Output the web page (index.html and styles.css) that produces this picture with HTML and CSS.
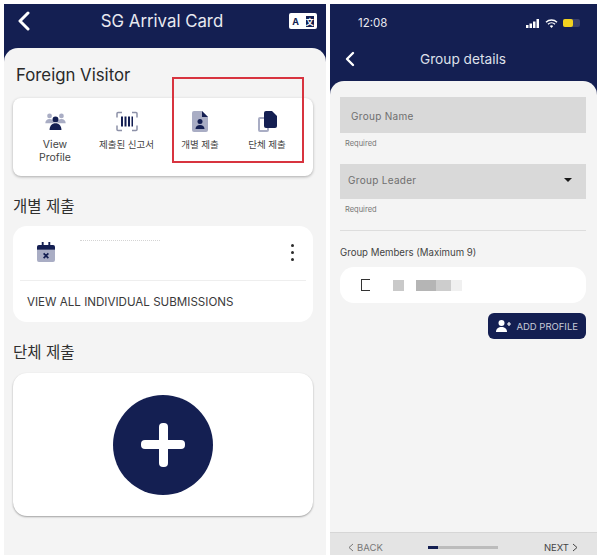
FILE: index.html
```html
<!DOCTYPE html>
<html>
  <head>
    <title>SG Arrival Card</title>
    <meta charset="UTF-8" />
    <link rel="stylesheet" href="styles.css">
  </head>
  <body>
    <div class="screens">
      <div class="phone phone-left">
        <header class="bar">
          <svg class="back" width="14" height="20" viewBox="0 0 14 20"><path d="M11 2 3 10l8 8" fill="none" stroke="#fff" stroke-width="3" stroke-linecap="round" stroke-linejoin="round"/></svg>
          <h1>SG Arrival Card</h1>
          <span class="lang"><b>A</b><i>文</i></span>
        </header>
        <main class="sheet">
          <h2 class="visitor">Foreign Visitor</h2>
          <div class="menu">
            <div class="menu-item item-a">
              <svg width="21" height="17" viewBox="0 0 24 20">
                <g fill="#a9adc4"><circle cx="5" cy="3.500" r="2.800"/><circle cx="19" cy="3.500" r="2.800"/><path d="M0 12c0-3 2-5 5-5s5 2 5 5zM14 12c0-3 2-5 5-5s5 2 5 5z"/></g>
                <g fill="#141f52"><circle cx="12" cy="7.500" r="3.500"/><path d="M5 20c0-5 3-8 7-8s7 3 7 8z"/></g>
              </svg>
              <span>View<br>Profile</span>
            </div>
            <div class="menu-item item-b">
              <svg width="22" height="20" viewBox="0 0 22 20">
                <path d="M1 6V2a1 1 0 0 1 1-1h4M16 1h4a1 1 0 0 1 1 1v4M21 14v4a1 1 0 0 1-1 1h-4M6 19H2a1 1 0 0 1-1-1v-4" fill="none" stroke="#8d91a8" stroke-width="1.500"/>
                <path d="M5 5h2v10H5zM8.500 5h2v10h-2zM12 5h2v10h-2zM15.500 5H17v10h-1.500z" fill="#141f52"/>
              </svg>
              <span class="label-ko">제출된 신고서</span>
            </div>
            <div class="menu-item item-c">
              <svg width="16" height="21" viewBox="0 0 16 21">
                <path d="M2 0h8l6 6v13a2 2 0 0 1-2 2H2a2 2 0 0 1-2-2V2a2 2 0 0 1 2-2z" fill="#a9adc4"/>
                <path d="M10 0l6 6h-6z" fill="#141f52"/>
                <circle cx="8" cy="10.500" r="2.500" fill="#141f52"/>
                <path d="M3.500 18c0-2.500 2-4 4.500-4s4.500 1.500 4.500 4z" fill="#141f52"/>
              </svg>
              <span class="label-ko">개별 제출</span>
            </div>
            <div class="menu-item item-d">
              <svg width="19" height="21" viewBox="0 0 19 21">
                <path d="M2 6h7a2 2 0 0 1 2 2v11a2 2 0 0 1-2 2H2a2 2 0 0 1-2-2V8a2 2 0 0 1 2-2z" fill="#a9adc4"/>
                <path d="M2 8h7v11H2z" fill="#fff"/>
                <path d="M8 0h6l5 5v10a2 2 0 0 1-2 2H8a2 2 0 0 1-2-2V2a2 2 0 0 1 2-2z" fill="#141f52"/>
              </svg>
              <span class="label-ko">단체 제출</span>
            </div>
          </div>

          <h2 class="section-title">개별 제출</h2>
          <div class="submissions">
            <div class="submission-row">
              <svg class="calendar" width="18" height="20" viewBox="0 0 19 21">
                <path d="M0 8h19v11a2 2 0 0 1-2 2H2a2 2 0 0 1-2-2z" fill="#a9adc4"/>
                <path d="M2 3h15a2 2 0 0 1 2 2v3H0V5a2 2 0 0 1 2-2z" fill="#141f52"/>
                <path d="M5 0h2v4H5zM12 0h2v4h-2z" fill="#141f52"/>
                <path d="m7 12 5 5M12 12l-5 5" stroke="#141f52" stroke-width="1.800"/>
              </svg>
              <span class="smudge"></span>
              <span class="dots"><i></i><i></i><i></i></span>
            </div>
            <div class="view-all">VIEW ALL INDIVIDUAL SUBMISSIONS</div>
          </div>

          <h2 class="section-title section-group">단체 제출</h2>
          <div class="group-card">
            <div class="add-circle"><span class="plus-h"></span><span class="plus-v"></span></div>
          </div>
        </main>
        <div class="highlight"></div>
      </div>

      <div class="phone phone-right">
        <header class="bar-tall">
          <div class="status">
            <span class="time">12:08</span>
            <span class="status-icons">
              <svg width="14" height="9" viewBox="0 0 14 9"><path d="M0 6h2.500v3H0zM3.500 4.500H6V9H3.500zM7 2.500h2.500V9H7zM10.500 0H13v9h-2.500z" fill="#fff"/></svg>
              <svg width="13" height="9" viewBox="0 0 13 9"><path d="M1 3.200a8 8 0 0 1 11 0M3 5.300a5 5 0 0 1 7 0" fill="none" stroke="#fff" stroke-width="1.400"/><path d="M6.500 9 4.800 7a2.500 2.500 0 0 1 3.400 0z" fill="#fff"/></svg>
              <span class="battery"><i></i></span>
            </span>
          </div>
          <div class="title-row">
            <svg width="10" height="16" viewBox="0 0 10 16"><path d="M8 2 2 8l6 6" fill="none" stroke="#fff" stroke-width="2.400" stroke-linecap="round" stroke-linejoin="round"/></svg>
            <h1>Group details</h1>
          </div>
        </header>
        <main class="form">
          <div class="field name-field">Group Name</div>
          <p class="hint">Required</p>
          <div class="field leader-field">Group Leader<span class="caret"></span></div>
          <p class="hint">Required</p>
          <hr class="rule">
          <h3>Group Members (Maximum 9)</h3>
          <div class="member">
            <span class="member-mark"></span>
            <span class="blur blur-a"></span>
            <span class="blur blur-b"></span>
            <span class="blur blur-c"></span>
            <span class="blur blur-d"></span>
          </div>
          <div class="add-row">
            <div class="add-profile">
              <svg width="15" height="12" viewBox="0 0 15 12"><circle cx="5.500" cy="3" r="3" fill="#fff"/><path d="M0 12c0-3.500 2.500-5 5.500-5s5.500 1.500 5.500 5z" fill="#fff"/><path d="M11 4h4M13 2v4" stroke="#fff" stroke-width="1.200"/></svg>
              ADD PROFILE
            </div>
          </div>
        </main>
        <footer class="steps">
          <span class="step-link">
            <svg width="6" height="9" viewBox="0 0 6 9"><path d="M5 1 1 4.500 5 8" fill="none" stroke="#777" stroke-width="1"/></svg>
            BACK
          </span>
          <span class="progress"><i></i></span>
          <span class="step-link step-next">
            NEXT
            <svg width="6" height="9" viewBox="0 0 6 9"><path d="M1 1l4 3.500L1 8" fill="none" stroke="#444" stroke-width="1"/></svg>
          </span>
        </footer>
      </div>
    </div>
  </body>
</html>
```

FILE: styles.css
```css
html,
body {
  margin: 0;
  height: 555px;
  overflow: hidden;
  background: #fff;
}

body {
  font-family: Inter, "Noto Sans CJK KR", sans-serif;
  color: #2b2b2b;
}

h1,
h2,
h3,
p {
  margin: 0;
  font-weight: 400;
}

.screens {
  display: flex;
  gap: 4px;
  padding: 4px 3px 0 4px;
  height: 551px;
}

.phone {
  position: relative;
  display: flex;
  flex-direction: column;
  background: #141f52;
  overflow: hidden;
}

.phone-left {
  width: 322px;
}

.phone-right {
  width: 267px;
}

.bar {
  display: flex;
  align-items: center;
  justify-content: space-between;
  height: 34px;
  padding: 0 9px 0 13px;
  flex: none;
}

.bar h1 {
  margin-left: 4px;
  font-size: 16.800px;
  color: #e8e9f0;
}

.lang {
  display: flex;
  align-items: center;
  justify-content: space-around;
  width: 28px;
  height: 16px;
  background: #fff;
  border-radius: 2px;
  font-size: 9px;
  color: #141f52;
}

.lang i {
  font-style: normal;
  font-family: "Noto Sans CJK SC", sans-serif;
  font-weight: 700;
  font-size: 8px;
  background: #141f52;
  color: #fff;
  line-height: 11px;
}

.sheet {
  flex: 1;
  margin-top: 10px;
  background: #f4f4f4;
  border-radius: 14px 14px 0 0;
  padding: 16px 13px 0 9px;
}

.visitor {
  font-size: 16.800px;
  line-height: 22px;
  margin-left: 3px;
  color: #2a2a2a;
}

.menu {
  display: flex;
  height: 78px;
  margin-top: 12px;
  background: #fff;
  border-radius: 8px;
  box-shadow: 0 1px 3px rgba(0, 0, 0, 0.3);
}

.menu-item {
  display: flex;
  flex-direction: column;
  align-items: center;
  flex: none;
  padding-top: 13px;
  font-size: 10.500px;
  line-height: 12.500px;
  text-align: center;
  color: #444;
}

.menu-item svg {
  height: 21px;
  margin-bottom: 7px;
}

.menu-item .label-ko {
  font-size: 9.500px;
}

.item-a svg {
  height: 17px;
  margin: 2px 0 9px;
}

.item-a {
  width: 84px;
}

.item-b {
  width: 59px;
}

.item-c {
  width: 88px;
}

.item-d {
  width: 46px;
}

.menu-item span {
  white-space: nowrap;
}

.section-title {
  font-size: 15.500px;
  line-height: 22px;
  margin-top: 20px;
  color: #2f2f2f;
}

.section-group {
  margin-top: 20px;
}

.submissions {
  margin-top: 8px;
  background: #fff;
  border-radius: 14px;
  height: 96px;
}

.submission-row {
  position: relative;
  display: flex;
  align-items: center;
  justify-content: space-between;
  height: 54px;
  margin: 0 7px;
  padding: 0 12px 0 17px;
  border-bottom: 1px solid #eee;
}

.calendar,
.dots {
  margin-top: -2px;
}

.smudge {
  position: absolute;
  left: 60px;
  top: 14px;
  width: 80px;
  border-top: 1px dotted #d4d4d4;
}

.dots {
  display: flex;
  flex-direction: column;
  gap: 4px;
}

.dots i {
  width: 3px;
  height: 3px;
  border-radius: 50%;
  background: #2b2b2b;
}

.view-all {
  padding: 14px 0 0 14px;
  font-size: 11.600px;
  color: #3a3a3a;
}

.group-card {
  display: flex;
  align-items: center;
  justify-content: center;
  height: 143px;
  margin-top: 9px;
  background: #fff;
  border-radius: 14px;
  box-shadow: 0 1px 2px rgba(0, 0, 0, 0.35);
}

.add-circle {
  position: relative;
  width: 100px;
  height: 100px;
  border-radius: 50%;
  background: #141f52;
}

.plus-h,
.plus-v {
  position: absolute;
  background: #fff;
  border-radius: 4px;
}

.plus-h {
  left: 28px;
  top: 45px;
  width: 44px;
  height: 9px;
}

.plus-v {
  left: 46px;
  top: 28px;
  width: 9px;
  height: 44px;
}

.highlight {
  position: absolute;
  left: 168px;
  top: 73px;
  width: 132px;
  height: 86px;
  box-sizing: border-box;
  border: 2px solid #d8343f;
}

.bar-tall {
  flex: none;
  height: 77px;
  box-sizing: border-box;
  padding: 13px 17px 0 15px;
  color: #e8e9f0;
}

.status {
  display: flex;
  align-items: center;
  justify-content: space-between;
  padding-left: 13px;
  height: 12px;
}

.time {
  font-size: 11.500px;
}

.status-icons {
  display: flex;
  align-items: center;
  gap: 5px;
}

.battery {
  display: block;
  width: 17px;
  height: 8px;
  border-radius: 2px;
  background: #39406b;
}

.battery i {
  display: block;
  width: 10px;
  height: 8px;
  border-radius: 2px;
  background: #f2d21f;
}

.title-row {
  display: flex;
  align-items: center;
  margin-top: 19px;
  height: 22px;
}

.title-row h1 {
  flex: 1;
  margin-right: 9px;
  text-align: center;
  font-size: 13.700px;
  color: #dfe0ea;
}

.form {
  flex: 1;
  background: #f4f4f4;
  border-radius: 14px 14px 0 0;
  padding: 16px 11px 0 10px;
}

.field {
  display: flex;
  align-items: center;
  justify-content: space-between;
  height: 36px;
  background: #d9d9d9;
  font-size: 10px;
  letter-spacing: 0.3px;
  color: #6f6f6f;
}

.name-field {
  padding-left: 11px;
  padding-top: 2px;
  box-sizing: border-box;
}

.leader-field {
  padding: 10px 14px 0 8px;
  height: 35px;
  align-items: flex-start;
  box-sizing: border-box;
}

.caret {
  margin-top: 4px;
  border-top: 4px solid #1a1a1a;
  border-left: 4px solid transparent;
  border-right: 4px solid transparent;
}

.hint {
  margin: 6px 0 16px 5px;
  font-size: 7.500px;
  line-height: 9px;
  color: #777;
}

.rule {
  margin: 11px 0 0;
  border: 0;
  border-top: 1px solid #ddd;
}

.form h3 {
  margin-top: 15px;
  font-size: 9.650px;
  line-height: 14px;
  color: #444;
}

.member {
  display: flex;
  align-items: center;
  height: 36px;
  margin-top: 7px;
  padding-left: 21px;
  background: #fff;
  border-radius: 14px;
}

.member-mark {
  width: 8px;
  height: 10px;
  margin-right: 23px;
  border: 1px solid #333;
  border-right: 0;
}

.blur {
  height: 11px;
}

.blur-a {
  width: 11px;
  margin-right: 12px;
  background: #c9c9c9;
}

.blur-b {
  width: 20px;
  background: #b5b5b5;
}

.blur-c {
  width: 15px;
  background: #cdcdcd;
}

.blur-d {
  width: 11px;
  background: #f0f0f0;
}

.add-row {
  display: flex;
  justify-content: flex-end;
  margin-top: 10px;
}

.add-profile {
  display: flex;
  align-items: center;
  gap: 5px;
  height: 26px;
  padding: 0 8px;
  background: #141f52;
  border-radius: 6px;
  font-size: 9.500px;
  color: #c9cbd8;
}

.steps {
  display: flex;
  align-items: center;
  justify-content: space-between;
  flex: none;
  height: 23px;
  padding: 6px 19px 0 18px;
  box-sizing: border-box;
  background: #e4e4e4;
  border-top: 1px solid #d6d6d6;
  font-size: 9.500px;
  color: #777;
}

.step-link {
  display: flex;
  align-items: center;
  gap: 3px;
}

.step-next {
  color: #444;
}

.progress {
  display: block;
  width: 70px;
  height: 3px;
  background: #bcbcbc;
}

.progress i {
  display: block;
  width: 10px;
  height: 3px;
  background: #141f52;
}
```
